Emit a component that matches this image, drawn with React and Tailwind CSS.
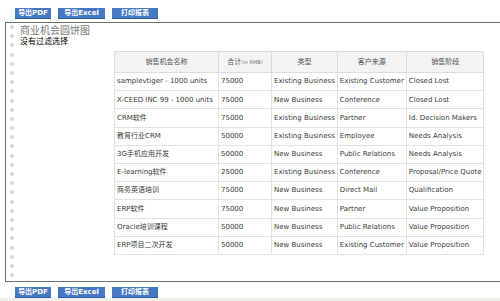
import React from 'react';

const rows = [
  ['samplevtiger - 1000 units', '75000', 'Existing Business', 'Existing Customer', 'Closed Lost'],
  ['X-CEED INC 99 - 1000 units', '75000', 'New Business', 'Conference', 'Closed Lost'],
  ['CRM软件', '75000', 'Existing Business', 'Partner', 'Id. Decision Makers'],
  ['教育行业CRM', '50000', 'Existing Business', 'Employee', 'Needs Analysis'],
  ['3G手机应用开发', '50000', 'New Business', 'Public Relations', 'Needs Analysis'],
  ['E-learning软件', '25000', 'Existing Business', 'Conference', 'Proposal/Price Quote'],
  ['商务英语培训', '75000', 'New Business', 'Direct Mail', 'Qualification'],
  ['ERP软件', '75000', 'New Business', 'Partner', 'Value Proposition'],
  ['Oracle培训课程', '50000', 'New Business', 'Public Relations', 'Value Proposition'],
  ['ERP项目二次开发', '50000', 'New Business', 'Existing Customer', 'Value Proposition'],
];

const widths = ['w-[104px]', 'w-[53px]', 'w-[65px]', 'w-[69px]', 'w-[76px]'];

const Buttons = () => (
  <div className="flex items-center gap-[7px] pl-[15px]">
    <button className="h-[11px] w-[36px] bg-[#4678c4] text-white text-[7px] font-bold leading-[11px] border-b border-[#2c5a9e]">导出PDF</button>
    <button className="h-[11px] w-[47px] bg-[#4678c4] text-white text-[7px] font-bold leading-[11px] border-b border-[#2c5a9e]">导出Excel</button>
    <button className="h-[11px] w-[46px] bg-[#4678c4] text-white text-[7px] font-bold leading-[11px] border-b border-[#2c5a9e]">打印报表</button>
  </div>
);

export default function App() {
  const dots = Array.from({ length: 28 });
  return (
    <div className="w-[500px] h-[301px] bg-white overflow-hidden flex flex-col" style={{ fontFamily: '"DejaVu Sans", "Noto Sans CJK SC", sans-serif' }}>
      <div className="h-[22px] pt-[8px]">
        <Buttons />
      </div>
      <div className="ml-[5px] h-[260px] border-l border-t border-b border-[#6e6e6e] flex overflow-hidden">
        <div className="w-[11px] flex flex-col items-center gap-[5.2px] pt-[2px]">
          {dots.map((_, i) => (
            <div key={i} className="w-[4px] h-[4px] rounded-full bg-[#d6d6d6] shrink-0" />
          ))}
        </div>
        <div className="flex-1 pl-[3px] pt-[2px]">
          <div className="text-[10px] leading-[12px] text-[#7a7a7a]">商业机会圆饼图</div>
          <div className="text-[8px] leading-[9px] text-black">没有过滤选择</div>
          <table className="ml-[94px] mt-[5px] border-collapse border border-[#e4e4e4] text-[7px] text-[#3a3a3a]">
            <thead>
              <tr className="h-[21px] bg-[#f3f3f3]">
                <th className={`${widths[0]} border border-[#dcdcdc] font-normal text-[#555]`}>销售机会名称</th>
                <th className={`${widths[1]} border border-[#dcdcdc] font-normal text-[#555]`}>合计<span className="text-[5px] text-[#777]">(in RMB)</span></th>
                <th className={`${widths[2]} border border-[#dcdcdc] font-normal text-[#555]`}>类型</th>
                <th className={`${widths[3]} border border-[#dcdcdc] font-normal text-[#555]`}>客户来源</th>
                <th className={`${widths[4]} border border-[#dcdcdc] font-normal text-[#555]`}>销售阶段</th>
              </tr>
            </thead>
            <tbody>
              {rows.map((r, i) => (
                <tr key={i} className="h-[18.2px]">
                  {r.map((c, j) => (
                    <td key={j} className={`${widths[j]} border border-[#e2e2e2] px-[2px] whitespace-nowrap`}>{c}</td>
                  ))}
                </tr>
              ))}
            </tbody>
          </table>
        </div>
      </div>
      <div className="h-[16px] pt-[5px]">
        <Buttons />
      </div>
      <div className="flex-1 bg-[#f1efe9]" />
    </div>
  );
}
